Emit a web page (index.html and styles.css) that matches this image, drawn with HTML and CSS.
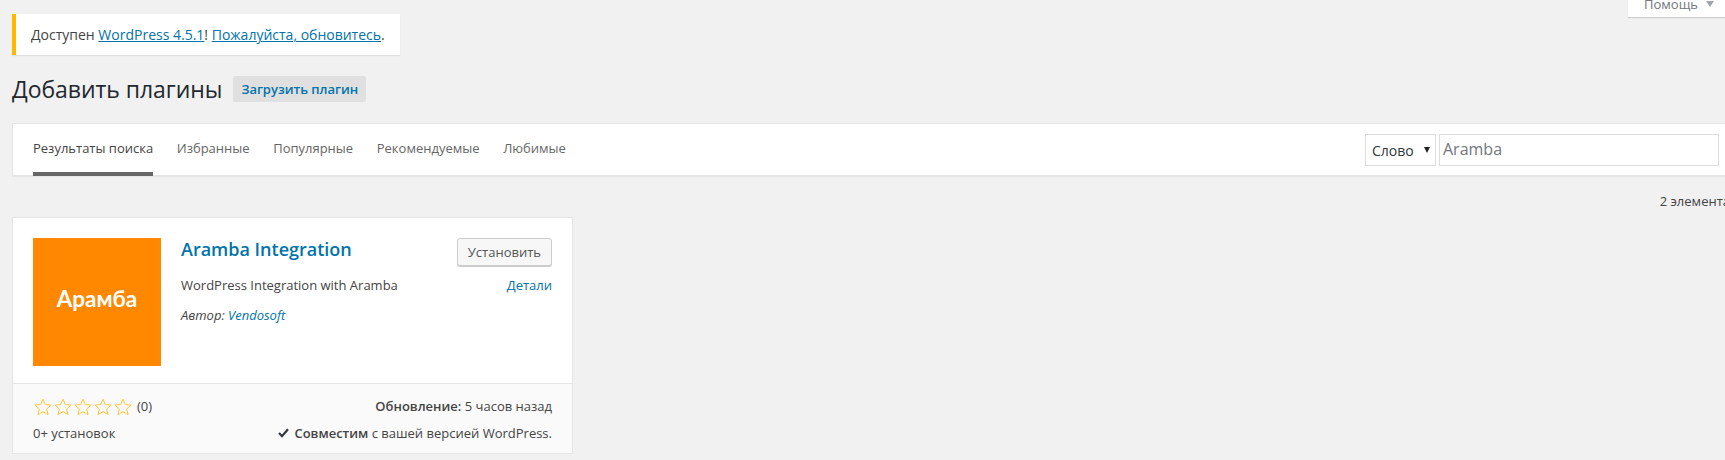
FILE: index.html
```html
<!DOCTYPE html>
<html lang="ru">
<head>
  <meta charset="UTF-8" />
  <title>Добавить плагины</title>
  <link rel="stylesheet" href="styles.css">
</head>
<body>

  <a class="help-tab" href="#">Помощь <span class="help-arrow"></span></a>

  <div class="wrap">
    <div class="update-nag">
      Доступен <a href="#">WordPress 4.5.1</a>! <a href="#">Пожалуйста, обновитесь</a>.
    </div>

    <div class="page-head">
      <h1>Добавить плагины</h1>
      <a class="upload-btn" href="#">Загрузить плагин</a>
    </div>

    <div class="filter-bar">
      <ul class="filter-links">
        <li><a class="current" href="#">Результаты поиска</a></li>
        <li><a href="#">Избранные</a></li>
        <li><a href="#">Популярные</a></li>
        <li><a href="#">Рекомендуемые</a></li>
        <li><a href="#">Любимые</a></li>
      </ul>
      <form class="search-form">
        <div class="search-type">Слово <span class="select-arrow"></span></div>
        <input class="search-input" type="search" value="Aramba">
      </form>
    </div>

    <div class="items-count">2 элемента</div>

    <!-- Plugin card -->
    <div class="plugin-card">
      <div class="card-top">
        <div class="plugin-icon">Арамба</div>
        <div class="plugin-info">
          <h3><a href="#">Aramba Integration</a></h3>
          <p class="plugin-desc">WordPress Integration with Aramba</p>
          <p class="plugin-author">Автор: <a href="#">Vendosoft</a></p>
        </div>
        <div class="plugin-actions">
          <a class="install-btn" href="#">Установить</a>
          <a class="details-link" href="#">Детали</a>
        </div>
      </div>
      <div class="card-bottom">
        <div class="card-col">
          <div class="rating">
            <svg class="star" viewBox="0 0 20 20"><path d="M10 2.2l2.3 5.4 5.8.5-4.4 3.8 1.3 5.7-5-3-5 3 1.3-5.7-4.4-3.8 5.8-.5z"/></svg>
            <svg class="star" viewBox="0 0 20 20"><path d="M10 2.2l2.3 5.4 5.8.5-4.4 3.8 1.3 5.7-5-3-5 3 1.3-5.7-4.4-3.8 5.8-.5z"/></svg>
            <svg class="star" viewBox="0 0 20 20"><path d="M10 2.2l2.3 5.4 5.8.5-4.4 3.8 1.3 5.7-5-3-5 3 1.3-5.7-4.4-3.8 5.8-.5z"/></svg>
            <svg class="star" viewBox="0 0 20 20"><path d="M10 2.2l2.3 5.4 5.8.5-4.4 3.8 1.3 5.7-5-3-5 3 1.3-5.7-4.4-3.8 5.8-.5z"/></svg>
            <svg class="star" viewBox="0 0 20 20"><path d="M10 2.2l2.3 5.4 5.8.5-4.4 3.8 1.3 5.7-5-3-5 3 1.3-5.7-4.4-3.8 5.8-.5z"/></svg>
            <span class="rating-count">(0)</span>
          </div>
          <div>0+ установок</div>
        </div>
        <div class="card-col card-col-right">
          <div class="updated"><strong>Обновление:</strong> 5 часов назад</div>
          <div class="compat">
            <svg class="check" viewBox="0 0 11 10"><path d="M1 5l3 3.2L10 1.2" /></svg>
            <strong>Совместим</strong> с вашей версией WordPress.
          </div>
        </div>
      </div>
    </div>
  </div>

</body>
</html>
```

FILE: styles.css
```css
html, body {
  margin: 0;
  padding: 0;
  height: 460px;
  overflow: hidden;
}

body {
  background-color: #f1f1f1;
  color: #444;
  font-family: 'Open Sans', sans-serif;
  font-size: 13px;
  line-height: 1.4;
}

a {
  color: #0073aa;
}

.wrap {
  width: 1719px;
  padding: 14px 0 0 12px;
}

.help-tab {
  position: absolute;
  top: -8px;
  left: 1628px;
  width: 97px;
  height: 25px;
  box-sizing: border-box;
  padding: 3px 0 0 16px;
  background-color: #fff;
  color: #72777c;
  text-decoration: none;
  box-shadow: 0 1px 1px rgba(0, 0, 0, 0.15);
  white-space: nowrap;
}

.help-arrow {
  display: inline-block;
  width: 0;
  height: 0;
  margin-left: 5px;
  border-left: 4px solid transparent;
  border-right: 4px solid transparent;
  border-top: 6px solid #a0a5aa;
  vertical-align: 2px;
}

.update-nag {
  width: 388px;
  height: 41px;
  box-sizing: border-box;
  padding: 11px 0 0 15px;
  background-color: #fff;
  border-left: 4px solid #ffb900;
  box-shadow: 0 1px 1px rgba(0, 0, 0, 0.08);
  color: #444;
  font-size: 14px;
  line-height: 19px;
  white-space: nowrap;
}

.page-head {
  display: flex;
  align-items: center;
  gap: 11px;
  margin: 21px 0 0 -1px;
  height: 26px;
}

.page-head h1 {
  margin: 0 0 0 1px;
  color: #23282d;
  font-size: 23px;
  font-weight: 400;
  letter-spacing: -0.05px;
  line-height: 26px;
}

.upload-btn {
  display: block;
  height: 26px;
  padding: 0 8px;
  background-color: #e0e0e0;
  border-radius: 2px;
  font-size: 13px;
  font-weight: 600;
  line-height: 27px;
  text-decoration: none;
}

.filter-bar {
  display: flex;
  justify-content: space-between;
  height: 53px;
  box-sizing: border-box;
  margin-top: 21px;
  background-color: #fff;
  border: 1px solid #e5e5e5;
  box-shadow: 0 1px 1px rgba(0, 0, 0, 0.04);
}

.filter-links {
  display: flex;
  gap: 23.6px;
  margin: 0 0 0 20px;
  padding: 0;
  list-style: none;
}

.filter-links a {
  display: block;
  height: 52px;
  box-sizing: border-box;
  padding-top: 15px;
  color: #666;
  text-decoration: none;
}

.filter-links a.current {
  border-bottom: 4px solid #666;
  color: #444;
}

.search-form {
  display: flex;
  gap: 3px;
  margin: 10px 11px 0 0;
}

.search-type {
  width: 71px;
  height: 32px;
  box-sizing: border-box;
  padding: 6px 0 0 6px;
  border: 1px solid #ddd;
  color: #32373c;
  font-size: 14px;
  line-height: 20px;
  white-space: nowrap;
}

.select-arrow {
  display: inline-block;
  width: 0;
  height: 0;
  margin-left: 7px;
  border-left: 3px solid transparent;
  border-right: 3px solid transparent;
  border-top: 6px solid #222;
  vertical-align: 3px;
}

.search-input {
  width: 280px;
  height: 32px;
  box-sizing: border-box;
  margin: 0;
  padding: 0 3px 2px;
  background-color: #fff;
  border: 1px solid #ddd;
  color: #72777c;
  font-family: inherit;
  font-size: 16px;
  outline: none;
}

.items-count {
  margin: 16px 0 0;
  padding-right: 1px;
  text-align: right;
  color: #444;
  line-height: 18px;
}

.plugin-card {
  width: 561px;
  box-sizing: border-box;
  margin: 7px 0 0;
  background-color: #fff;
  border: 1px solid #e5e5e5;
}

.card-top {
  display: flex;
  height: 165px;
  box-sizing: border-box;
  padding: 20px 20px 0;
}

.plugin-icon {
  flex: none;
  width: 128px;
  height: 128px;
  background-color: #ff8800;
  color: #fff;
  font-family: 'Lato', sans-serif;
  font-size: 22.5px;
  font-weight: 700;
  line-height: 122px;
  text-align: center;
}

.plugin-info {
  flex: 1;
  padding-left: 20px;
}

.plugin-info h3 {
  margin: 0;
  font-size: 18px;
  font-weight: 600;
  line-height: 23px;
}

.plugin-info h3 a {
  text-decoration: none;
}

.plugin-desc {
  margin: 15px 0 0;
  line-height: 18px;
}

.plugin-author {
  margin: 12px 0 0;
  font-style: italic;
  line-height: 18px;
}

.plugin-author a {
  text-decoration: none;
}

.plugin-actions {
  display: flex;
  flex-direction: column;
  align-items: flex-end;
}

.install-btn {
  display: block;
  height: 28px;
  box-sizing: border-box;
  padding: 0 10px;
  background-color: #f7f7f7;
  border: 1px solid #ccc;
  border-radius: 3px;
  box-shadow: 0 1px 0 #ccc;
  color: #555;
  line-height: 26px;
  text-decoration: none;
}

.details-link {
  margin-top: 9px;
  line-height: 20px;
  text-decoration: none;
}

.card-bottom {
  display: flex;
  justify-content: space-between;
  height: 70px;
  box-sizing: border-box;
  padding: 9px 20px 0;
  background-color: #fafafa;
  border-top: 1px solid #e5e5e5;
}

.card-col > div {
  height: 27px;
  line-height: 27px;
  white-space: nowrap;
}

.card-col-right {
  text-align: right;
}

.rating {
  display: flex;
  align-items: center;
}

.star {
  width: 20px;
  height: 20px;
  fill: none;
  stroke: #ffc83d;
  stroke-width: 1;
}

.rating-count {
  margin-left: 4px;
}

.check {
  width: 11px;
  height: 10px;
  margin-right: 2px;
  fill: none;
  stroke: #32373c;
  stroke-width: 2.2;
}

.card-col strong {
  font-weight: 600;
}
```
